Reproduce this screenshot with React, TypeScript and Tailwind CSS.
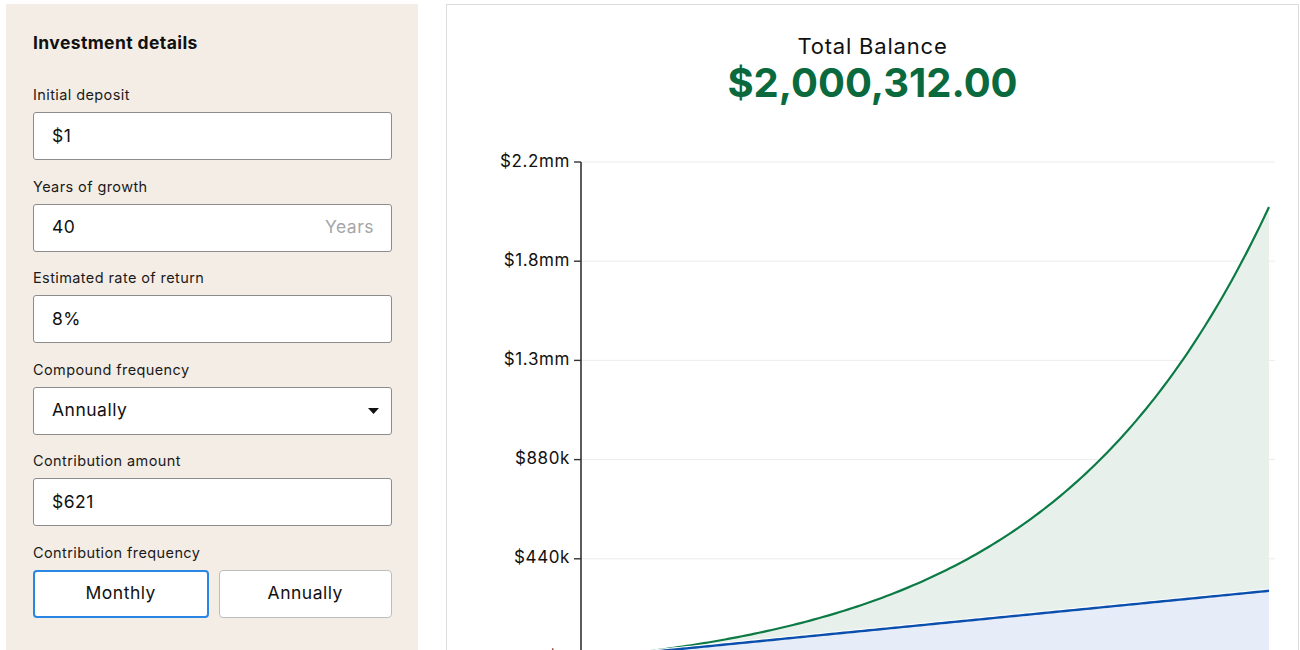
import React from "react";

const FONT = { fontFamily: "Inter, 'Open Sans', sans-serif" };

const X = (t: number) => 589 + 17 * t - 447;
const Y = (v: number) => 658 - (v / 2.2e6) * 496 - 110;

function green(t: number) {
  const r = 0.08;
  const f = (tt: number) => Math.pow(1 + r, tt) + (7452 * (Math.pow(1 + r, tt) - 1)) / r;
  return (f(t) * 2000312) / f(40);
}
function blue(t: number) {
  return 1 + 7452 * t;
}

function linePath(fn: (t: number) => number) {
  const pts: string[] = [];
  for (let i = 0; i <= 160; i++) {
    const t = i / 4;
    pts.push(`${i === 0 ? "M" : "L"}${X(t).toFixed(2)},${Y(fn(t)).toFixed(2)}`);
  }
  return pts.join(" ");
}
function areaPath(fn: (t: number) => number) {
  return `${linePath(fn)} L${X(40)},${Y(0) + 20} L${X(0)},${Y(0) + 20} Z`;
}

const ticks = [
  { v: 2.2e6, l: "$2.2mm" },
  { v: 1.76e6, l: "$1.8mm" },
  { v: 1.32e6, l: "$1.3mm" },
  { v: 0.88e6, l: "$880k" },
  { v: 0.44e6, l: "$440k" },
  { v: 0, l: "$0" },
];

function Field({ label, children }: { label: string; children: React.ReactNode }) {
  return (
    <div className="flex flex-col">
      <div className="text-[14.5px] leading-[20px] tracking-[0.4px] text-[#1a1a1a]">{label}</div>
      <div className="mt-[7px]">{children}</div>
    </div>
  );
}

function Input({ value, suffix, caret }: { value: string; suffix?: string; caret?: boolean }) {
  return (
    <div className="flex h-[48px] items-center justify-between rounded-[3px] border border-[#8c8c8c] bg-white pl-[18px] pr-[17px] text-[17.5px] tracking-[0.5px] text-[#111]">
      <span>{value}</span>
      {suffix && <span className="text-[#a6a6a6]">{suffix}</span>}
      {caret && (
        <svg width="11" height="6" viewBox="0 0 11 6" className="mr-[-5px]">
          <path d="M0 0 L11 0 L5.5 6 Z" fill="#111" />
        </svg>
      )}
    </div>
  );
}

export default function App() {
  return (
    <div className="h-[650px] overflow-hidden bg-white" style={FONT}>
      <div className="flex pl-[6px] pt-[4px]">
        <div className="h-[700px] w-[412px] shrink-0 bg-[#f4ede6] pl-[27px] pr-[26px] pt-[27px]">
          <div className="text-[17.5px] font-bold leading-[24px] tracking-[0.4px] text-[#111]">Investment details</div>
          <div className="mt-[30px] flex flex-col gap-[16.5px]">
            <Field label="Initial deposit">
              <Input value="$1" />
            </Field>
            <Field label="Years of growth">
              <Input value="40" suffix="Years" />
            </Field>
            <Field label="Estimated rate of return">
              <Input value="8%" />
            </Field>
            <Field label="Compound frequency">
              <Input value="Annually" caret />
            </Field>
            <Field label="Contribution amount">
              <Input value="$621" />
            </Field>
            <Field label="Contribution frequency">
              <div className="flex gap-[10px]">
                <button className="flex h-[48px] flex-1 items-center justify-center rounded-[4px] border-2 border-[#2a86e4] bg-white text-[17.5px] tracking-[0.5px] text-[#111]">
                  Monthly
                </button>
                <button className="flex h-[48px] flex-1 items-center justify-center rounded-[4px] border border-[#bdbdbd] bg-white text-[17.5px] tracking-[0.5px] text-[#111]">
                  Annually
                </button>
              </div>
            </Field>
          </div>
        </div>
        <div className="ml-[28px] h-[700px] w-[853px] shrink-0 border border-[#dcdcdc] bg-white">
          <div className="flex flex-col items-center pt-[27px]">
            <div className="text-[22px] leading-[28px] tracking-[0.8px] text-[#111]">Total Balance</div>
            <div className="text-[40px] font-bold leading-[46px] text-[#0a6a3e]">$2,000,312.00</div>
          </div>
          <svg width="851" height="580" className="mt-[4px] block" style={FONT}>
            {ticks.map((t) => (
              <line key={"g" + t.l} x1={581 - 447} x2={1275 - 447} y1={Y(t.v)} y2={Y(t.v)} stroke="#ececec" strokeWidth="1" />
            ))}
            <path d={areaPath(green)} fill="#e7f0eb" />
            <path d={areaPath(blue)} fill="#e6edf8" />
            <path d={linePath(green)} fill="none" stroke="#0b7a44" strokeWidth="2.2" />
            <g transform="translate(0,-1.5)">
              <path d={linePath(blue)} fill="none" stroke="#ffffff" strokeWidth="1.5" />
            </g>
            <path d={linePath(blue)} fill="none" stroke="#0b4fae" strokeWidth="2.4" />
            <line x1={581 - 447} x2={581 - 447} y1={Y(2.2e6)} y2={600} stroke="#333" strokeWidth="1.6" />
            {ticks.map((t) => (
              <g key={t.l}>
                <line x1={574 - 447} x2={581 - 447} y1={Y(t.v)} y2={Y(t.v)} stroke="#333" strokeWidth="1.4" />
                <text x={570 - 447} y={Y(t.v)} textAnchor="end" dominantBaseline="middle" fontSize="17" letterSpacing="0.6" fill="#111">
                  {t.l}
                </text>
              </g>
            ))}
          </svg>
        </div>
      </div>
    </div>
  );
}
